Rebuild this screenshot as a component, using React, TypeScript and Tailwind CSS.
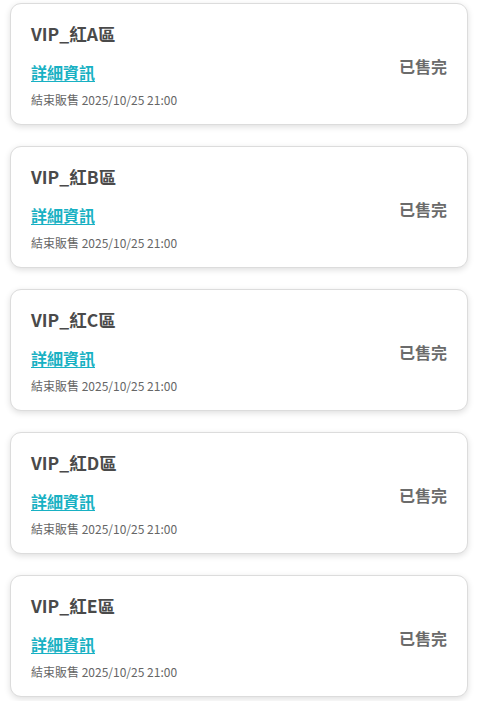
import React from "react";

const zones = ["A", "B", "C", "D", "E"];

export default function App() {
  return (
    <div
      className="min-h-screen bg-white pt-[3px] pl-[10px] pr-[13px] flex flex-col gap-[21px]"
      style={{ fontFamily: '"Noto Sans CJK TC", "Noto Sans", sans-serif' }}
    >
      {zones.map((z) => (
        <div
          key={z}
          className="h-[122px] rounded-[11px] border border-[#dcdcdc] bg-white shadow-[0_2px_6px_rgba(0,0,0,0.13)] px-5 flex items-start justify-between"
        >
          <div className="flex flex-col pt-[17px]">
            <div className="text-[17.5px] leading-[26px] font-bold text-[#4a4a4a]">
              VIP_紅{z}區
            </div>
            <a
              href="#"
              className="mt-[14px] text-[16px] leading-[22px] font-bold text-[#18b1c3] underline underline-offset-2 self-start"
            >
              詳細資訊
            </a>
            <div className="mt-[8px] text-[12px] leading-[18px] text-[#666666]">
              結束販售 2025/10/25 21:00
            </div>
          </div>
          <div className="self-center mt-[4px] text-[16px] font-bold text-[#6b6b6b]">
            已售完
          </div>
        </div>
      ))}
    </div>
  );
}
